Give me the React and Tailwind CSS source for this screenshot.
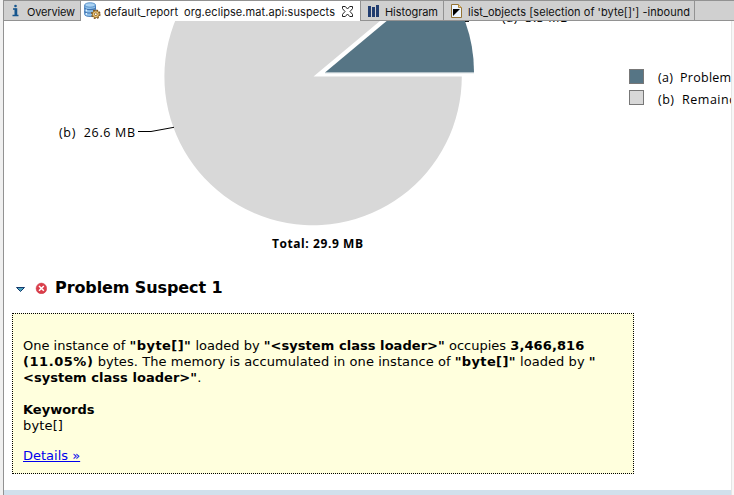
import React from 'react';

const line = "block w-max whitespace-pre";

function Pie() {
  return (
    <svg width="727" height="246" viewBox="4 21 727 246" className="block shrink-0" fontFamily="'Open Sans', 'Noto Sans', sans-serif">
      <path d="M313.5 76.5H461.8A148.7 148.7 0 1 1 427.4 -18.6Z" fill="#d8d8d8" />
      <path d="M325 72.5H474A148.7 148.7 0 0 0 439.5 -23.2Z" fill="#567585" />
      <path d="M325 72.8H474" stroke="#b9c5cc" strokeWidth="0.8" />
      <path d="M138 131.5H151L174 127.3" fill="none" stroke="#000" />
      <path d="M465 21.4H469" stroke="#000" />
      <text x="59" y="136.5" fontSize="12.5" textLength="76" xmlSpace="preserve">(b)&#160; 26.6 MB</text>
      <text x="502" y="22" fontSize="12.5" textLength="66">(a)&#160; 3.3 MB</text>
      <text x="272" y="248" fontSize="12" fontWeight="700" textLength="91">Total: 29.9 MB</text>
      <rect x="629.5" y="69.5" width="14" height="14" fill="#567585" stroke="#777" />
      <rect x="629.5" y="90.5" width="14" height="14" fill="#d8d8d8" stroke="#777" />
      <text x="658" y="82" fontSize="12.5" textLength="135">(a)&#160; Problem Suspect 1</text>
      <text x="658" y="104" fontSize="12.5" textLength="92">(b)&#160; Remainder</text>
    </svg>
  );
}

function DatabaseGear() {
  return (
    <svg width="17" height="17" viewBox="0 0 17 17" className="block shrink-0">
      <path d="M.7 3v9.5c0 2.6 10.8 2.6 10.8 0V3" fill="#8fc1ea" stroke="#4a80bd" />
      <ellipse cx="6.1" cy="3" rx="5.4" ry="2.2" fill="#a9d2f3" stroke="#5b93cb" />
      <path d="M.7 5.8c0 2.4 10.8 2.4 10.8 0M.7 9.2c0 2.4 10.8 2.4 10.8 0" fill="none" stroke="#3c70b0" strokeWidth="1.1" />
      <path d="M2.5 7.6v1.6M2.5 11v1.8" stroke="#e2f2fd" strokeWidth="1.2" />
      <circle cx="11.8" cy="12.2" r="4" fill="none" stroke="#80551c" strokeWidth="1.6" strokeDasharray="1.8 1.34" />
      <circle cx="11.8" cy="12.2" r="3.4" fill="#f5cf79" stroke="#80551c" strokeWidth=".8" />
      <circle cx="11.8" cy="12.2" r="1.4" fill="#fff" stroke="#80551c" strokeWidth=".8" />
    </svg>
  );
}

function Label({ w, children }) {
  return (
    <svg width={w} height="20" className="block shrink-0 overflow-visible" fontFamily="Inter, Roboto, sans-serif">
      <text x="0" y="14.5" fontSize="11" textLength={w} fill="#111">{children}</text>
    </svg>
  );
}

function Tabs() {
  return (
    <div className="flex h-[21px] shrink-0 border-y border-[#929292] bg-[#d0d0d0]">
      <div className="flex w-[77px] shrink-0 border-r border-[#929292] pl-2">
        <svg width="15" height="19" className="block shrink-0"><path d="M1 8h3.5v6M0.5 14.5h6" fill="none" stroke="#17568e" strokeWidth="1.5" /><path d="M3.5 7.5v7" stroke="#17568e" strokeWidth="2" /><circle cx="3.5" cy="5" r="1.3" fill="#17568e" /></svg>
        <Label w="48">Overview</Label>
      </div>
      <div className="-mb-px flex w-[279px] shrink-0 bg-white pl-[3px] pt-px">
        <DatabaseGear />
        <div className="-mt-px ml-[3px] flex"><Label w="74">default_report</Label></div>
        <div className="-mt-px ml-[6px] flex"><Label w="151">org.eclipse.mat.api:suspects</Label></div>
        <svg width="11" height="11" viewBox="0 0 11 11" className="ml-[7px] mt-1 block shrink-0"><path d="M.5 .5h2.8L5.5 3 7.7.5h2.8v2.2L8 5.5l2.5 2.8v2.2H7.7L5.5 8l-2.2 2.5H.5V8.3L3 5.5.5 2.7Z" fill="#fff" stroke="#222" /></svg>
      </div>
      <div className="flex w-[84px] shrink-0 border-x border-[#929292] pl-[7px]">
        <svg width="11" height="19" className="block shrink-0"><path d="M0 5h3v11H0zM4 6h3v10H4zM8 4h3v12H8z" fill="#213d70" /></svg>
        <div className="ml-[6px]"><Label w="53">Histogram</Label></div>
      </div>
      <div className="flex w-[251px] shrink-0 border-r border-[#929292] pl-[7px]">
        <svg width="11" height="19" className="block shrink-0"><path d="M.5 3.5h7l3 3v10H.5z" fill="#edf5ff" stroke="#957334" /><path d="M7.5 3.5v3h3" fill="#efce87" stroke="#b38a40" /><path d="M2 8h7L2 15z" fill="#000" /></svg>
        <div className="ml-[6px]"><Label w="222">list_objects [selection of 'byte[]'] -inbound</Label></div>
      </div>
    </div>
  );
}

export default function App() {
  return (
    <div className="flex h-[495px] w-[734px] overflow-hidden bg-white text-black">
      <div className="w-1 shrink-0 border-r border-[#929292] bg-[#f0f0f0]" />
      <div className="flex w-[730px] flex-col">
        <Tabs />
        <div className="flex h-[474px]">
          <main className="flex w-[727px] shrink-0 flex-col overflow-hidden font-['DejaVu_Sans',sans-serif]">
            <Pie />
            <div className="flex h-[46px] shrink-0 items-start pl-[12px]">
              <svg width="9" height="5" className="mt-5 block shrink-0"><path d="M.5.5h8L4.5 4.5z" fill="#4aa3bd" stroke="#14396c" /></svg>
              <svg width="12" height="12" viewBox="0 0 12 12" className="ml-[10px] mt-[15px] block shrink-0"><circle cx="6.4" cy="6.4" r="5.3" fill="#db3e4b" stroke="#c93443" strokeWidth=".5" /><path d="M4 4l4.8 4.8m0-4.8l-4.8 4.8" stroke="#fff" strokeWidth="1.5" /></svg>
              <h2 className="ml-2 mt-[11px] whitespace-nowrap text-[16px] font-bold leading-[20px] tracking-[-0.1px]">Problem Suspect 1</h2>
            </div>
            <section className="ml-2 h-[161px] w-[622px] shrink-0 border border-dotted border-black bg-[#ffffdd] pl-[10px] pt-6 text-[13px] leading-[16px]">
              <p>
                <span className={line}>One instance of <b className="tracking-[0.45px]">"byte[]"</b> loaded by <b className="tracking-[0.05px]">"&lt;system class loader&gt;"</b> occupies <b className="tracking-[0.1px]">3,466,816</b></span>
                <span className={line + " tracking-[0.06px]"}><b className="tracking-[0.55px]">(11.05%)</b> bytes. The memory is accumulated in one instance of <b className="tracking-[0.35px]">"byte[]"</b> loaded by <b>"</b></span>
                <span className={line}><b className="tracking-[0.04px]">&lt;system class loader&gt;"</b>.</span>
              </p>
              <p className="mt-4"><b className={line}>Keywords</b><span className={line + " tracking-[0.15px]"}>byte[]</span></p>
              <a className="mt-[14px] block w-max text-[#0000ee] underline">Details »</a>
            </section>
            <div className="mt-4 h-6 shrink-0 bg-[#d1e0ec]" />
          </main>
          <div className="w-[3px] shrink-0 border-l border-[#e5e5e5] bg-[#f7f7f7]" />
        </div>
      </div>
    </div>
  );
}
